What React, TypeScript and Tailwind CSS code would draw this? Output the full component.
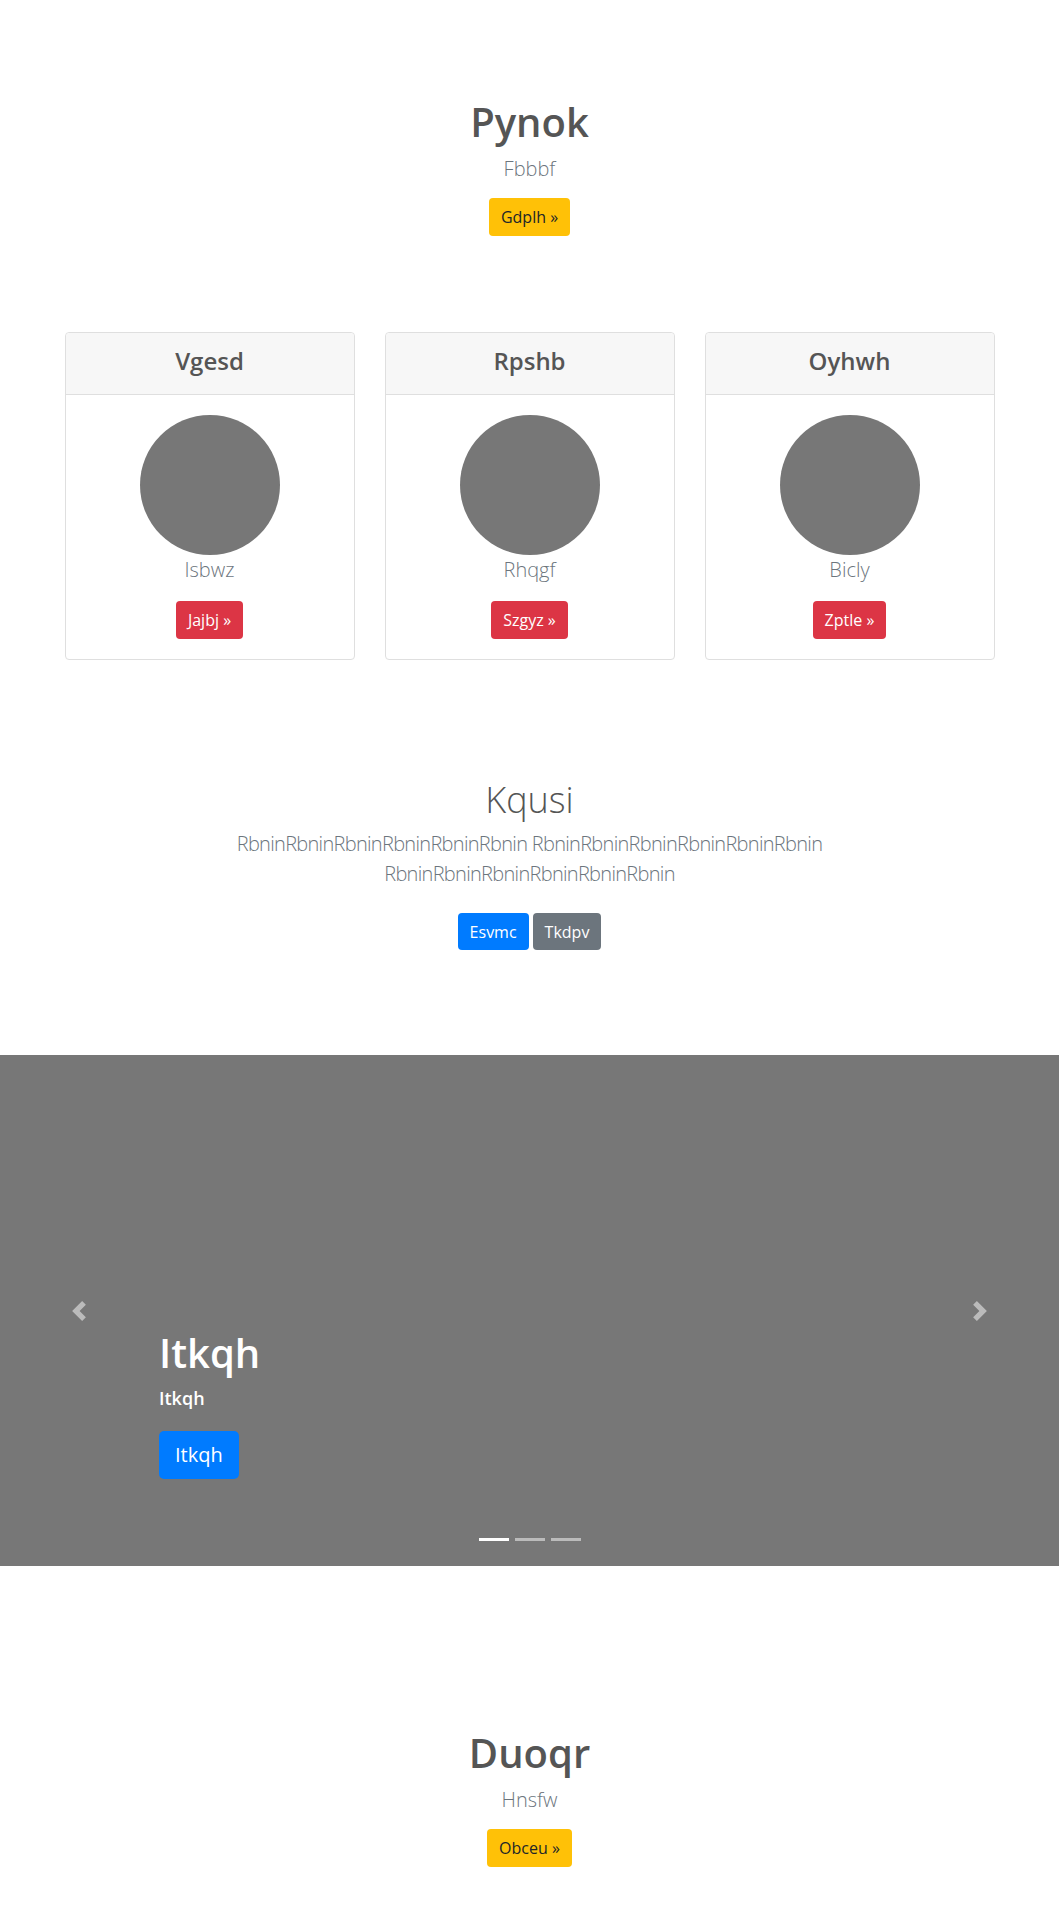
const cards = [
  { title: 'Vgesd', name: 'Isbwz', cta: 'Jajbj »' },
  { title: 'Rpshb', name: 'Rhqgf', cta: 'Szgyz »' },
  { title: 'Oyhwh', name: 'Bicly', cta: 'Zptle »' }
];

const Chevron = ({ dir }: { dir: 'left' | 'right' }) => (
  <svg width="20" height="20" viewBox="0 0 8 8" fill="#fff" className="opacity-50">
    {dir === 'left' ? (
      <path d="M5.25 0l-4 4 4 4 1.5-1.5-2.5-2.5 2.5-2.5-1.5-1.5z" />
    ) : (
      <path d="M2.75 0l-1.5 1.5 2.5 2.5-2.5 2.5 1.5 1.5 4-4-4-4z" />
    )}
  </svg>
);

const Hero = ({ title, sub, cta }: { title: string; sub: string; cta: string }) => (
  <div className="flex flex-col items-center text-center">
    <h1 className="text-[40px] leading-[48px] font-semibold text-[#555]">{title}</h1>
    <p className="mt-2 text-xl leading-[30px] font-light text-[#6c757d]">{sub}</p>
    <button className="mt-[14px] h-[38px] px-3 rounded bg-[#ffc107] text-[#212529] text-base">{cta}</button>
  </div>
);

export default function App() {
  return (
    <div className="min-h-[1920px] bg-white font-['Open_Sans',sans-serif]">
      <div className="pt-[98px]">
        <Hero title="Pynok" sub="Fbbbf" cta="Gdplh »" />
      </div>

      <div className="mx-auto mt-[96px] w-[930px] grid grid-cols-3 gap-[30px]">
        {cards.map((c, i) => (
          <div key={i} className="rounded border border-[#dfdfdf] bg-white">
            <div className="h-[62px] flex items-center justify-center bg-[#f7f7f7] border-b border-[#dfdfdf] rounded-t">
              <h4 className="text-2xl leading-[29px] font-semibold text-[#555] -mt-[6px]">{c.title}</h4>
            </div>
            <div className="p-5 flex flex-col items-center">
              <div className="w-[140px] h-[140px] rounded-full bg-[#777]"></div>
              <p className="text-xl leading-[30px] font-light text-[#6c757d]">{c.name}</p>
              <button className="mt-4 h-[38px] px-3 rounded bg-[#dc3545] text-white text-base">{c.cta}</button>
            </div>
          </div>
        ))}
      </div>

      <div className="mt-[118px] flex flex-col items-center text-center">
        <h2 className="text-[36px] leading-[43px] font-light text-[#555]">Kqusi</h2>
        <p className="mt-2 text-xl leading-[30px] font-light tracking-[-0.7px] text-[#6c757d]">
          RbninRbninRbninRbninRbninRbnin RbninRbninRbninRbninRbninRbnin
          <br />
          RbninRbninRbninRbninRbninRbnin
        </p>
        <div className="mt-6 flex gap-1">
          <button className="h-[37px] px-3 rounded bg-[#007bff] text-white text-base">Esvmc</button>
          <button className="h-[37px] px-3 rounded bg-[#6c757d] text-white text-base">Tkdpv</button>
        </div>
      </div>

      <div className="relative mt-[105px] h-[511px] bg-[#777] flex flex-col items-start justify-end pl-[159px] pb-[87px]">
        <h3 className="text-[40px] leading-[48px] font-semibold text-white">Itkqh</h3>
        <p className="mt-2 text-lg leading-[27px] font-semibold text-white">Itkqh</p>
        <button className="mt-[19px] h-12 px-4 rounded-[5px] bg-[#007bff] text-white text-xl">Itkqh</button>

        <div className="absolute left-0 top-0 bottom-0 w-[15%] flex items-center justify-center">
          <Chevron dir="left" />
        </div>
        <div className="absolute right-0 top-0 bottom-0 w-[15%] flex items-center justify-center">
          <Chevron dir="right" />
        </div>
        <div className="absolute left-0 right-0 bottom-[25px] flex justify-center gap-[6px]">
          <span className="w-[30px] h-[3px] bg-white"></span>
          <span className="w-[30px] h-[3px] bg-white/50"></span>
          <span className="w-[30px] h-[3px] bg-white/50"></span>
        </div>
      </div>

      <div className="pt-[163px]">
        <Hero title="Duoqr" sub="Hnsfw" cta="Obceu »" />
      </div>
    </div>
  );
}
